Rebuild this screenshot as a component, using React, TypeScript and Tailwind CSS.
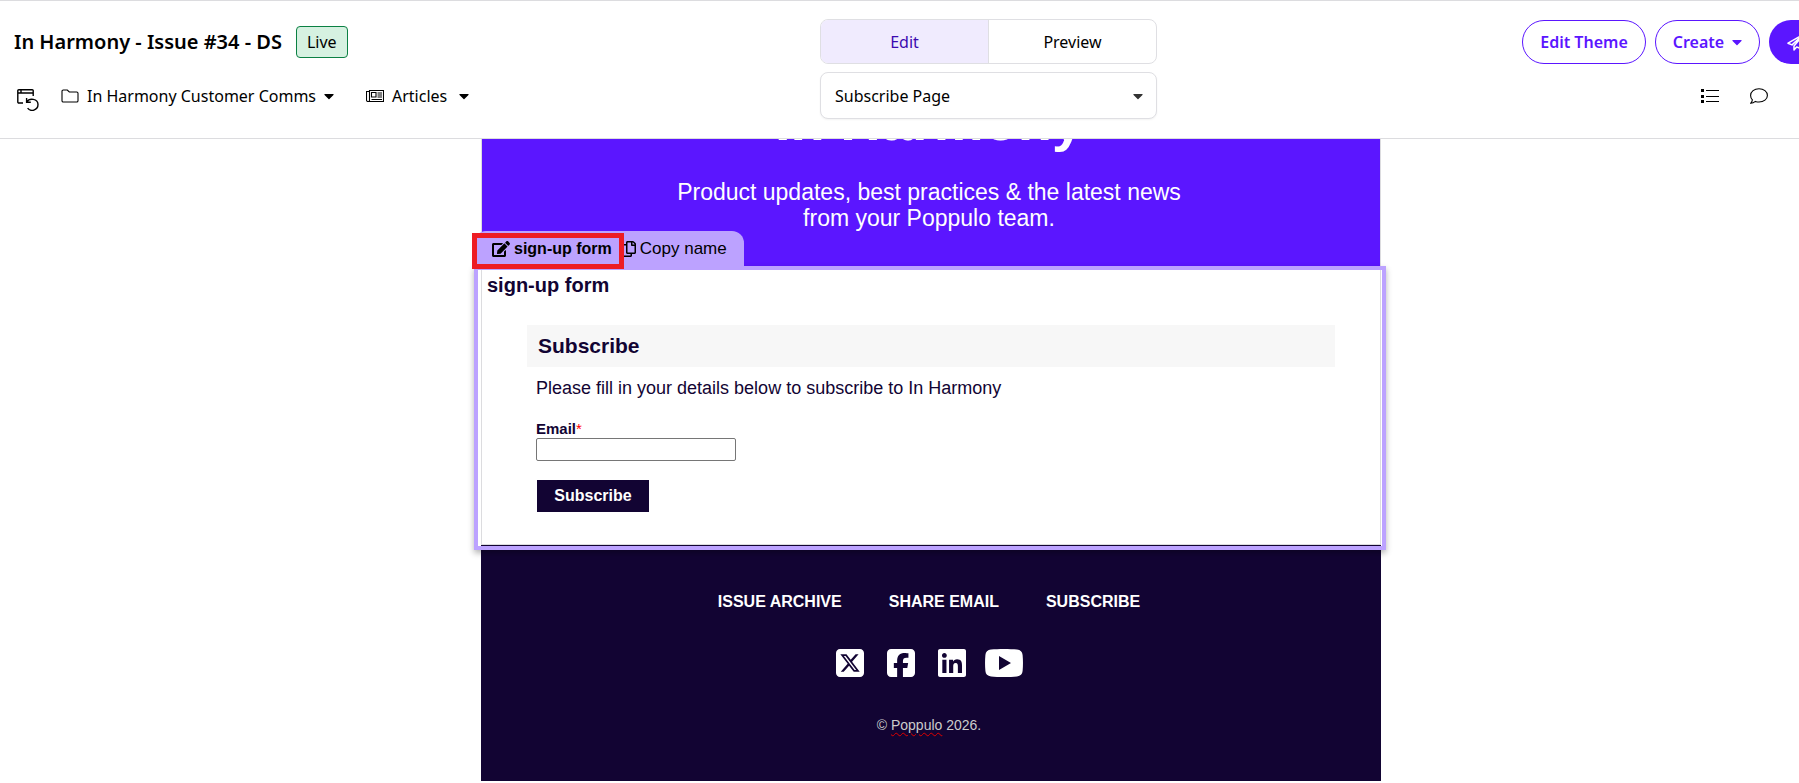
import React from "react";
import { FaCaretDown, FaEdit, FaRegCopy } from "react-icons/fa";
import {
  FaLinkedin,
  FaSquareFacebook,
  FaSquareXTwitter,
} from "react-icons/fa6";

interface IconProps {
  className?: string;
}

const RestoreIcon: React.FC<IconProps> = ({ className }) => (
  <svg viewBox="0 0 22 22" fill="none" stroke="currentColor" className={className}>
    <path d="M6 14H1.8a1 1 0 0 1-1-1V1.7a1 1 0 0 1 1-1h13.4a1 1 0 0 1 1 1V7M.8 4h15.4M4 1v3" strokeWidth="1.4" />
    <path d="M9.8 13c2.4-4.2 11.2-3.6 11.2 2.6 0 6-7.6 7.4-10.4 3.6M9.6 9v4.2h4.2" strokeWidth="1.4" />
  </svg>
);

const FolderIcon: React.FC<IconProps> = ({ className }) => (
  <svg viewBox="0 0 18 14" fill="none" stroke="currentColor" strokeWidth="1.1" className={className}>
    <path d="M1 2.3A1.3 1.3 0 0 1 2.3 1h4l2 2h7.4A1.3 1.3 0 0 1 17 4.3v7.4a1.3 1.3 0 0 1-1.3 1.3H2.3A1.3 1.3 0 0 1 1 11.7z" />
  </svg>
);

const ArticleIcon: React.FC<IconProps> = ({ className }) => (
  <svg viewBox="0 0 18 14" fill="none" stroke="currentColor" strokeWidth="1.1" className={className}>
    <path d="M3.5 11.5v-10h14v11H2A1.5 1.5 0 0 1 .5 11V2.5h3M3.5 11.5a1 1 0 0 1-1 1" />
    <path d="M5.5 3.5H10V8H5.5zM11.5 4H16M11.500 6H16M11.500 8H16M5.500 10.500H16" />
  </svg>
);

const ListIcon: React.FC<IconProps> = ({ className }) => (
  <svg viewBox="0 0 18 16" fill="currentColor" className={className}>
    <path d="M0 1h3v3H0zM0 7h3v3H0zM0 12h3v3H0zM5 2h13v1H5zM5 8h13v1H5zM5 13h13v1H5z" />
  </svg>
);

const CommentIcon: React.FC<IconProps> = ({ className }) => (
  <svg viewBox="0 0 18 16" fill="none" stroke="currentColor" strokeWidth="1.1" className={className}>
    <path d="M9 .7c4.7 0 8.4 2.9 8.400 6.700S13.700 14 9 14c-1.300 0-2.500-.2-3.600-.6C4.300 14.300 2.700 15.200.8 15.200c.9-1 1.500-2.200 1.600-3.400C1.200 10.600.6 9.100.6 7.400.6 3.600 4.300.7 9 .7z" />
  </svg>
);

const SendIcon: React.FC<IconProps> = ({ className }) => (
  <svg viewBox="0 0 18 18" fill="none" stroke="currentColor" strokeWidth="1.5" strokeLinejoin="round" className={className}>
    <path d="M17 1 1 10.200l4 1.700L17 1 7 13v4l2.600-3.100L14 15.700z" />
  </svg>
);

const YoutubeIcon: React.FC<IconProps> = ({ className }) => (
  <svg viewBox="0 0 38 28" fill="currentColor" className={className}>
    <path
      fillRule="evenodd"
      d="M6 .6C13-.2 25-.2 32 .6c3.500.4 5.300 2.200 5.600 5.400.5 5 .5 11 0 16-.3 3.200-2.100 5-5.600 5.400-7 .8-19 .8-26 0C2.500 27 .7 25.200.4 22c-.5-5-.5-11 0-16C.7 2.800 2.500 1 6 .6zM14 7v14l12-7z"
    />
  </svg>
);

const footerLinks = ["ISSUE ARCHIVE", "SHARE EMAIL", "SUBSCRIBE"];

const Header: React.FC = () => (
  <header className="flex shrink-0 overflow-hidden border-y border-[#dcdcdf] bg-white pt-[18px] pb-[19px] font-['Noto_Sans',sans-serif] text-base text-black">
    <div className="flex w-[820px] shrink-0 flex-col pl-3.5">
      <div className="flex h-[46px] items-center gap-3.5">
        <h1 className="text-xl font-semibold">In Harmony - Issue #34 - DS</h1>
        <span className="flex h-8 items-center rounded-sm border border-[#0b8043] bg-[#d6f1e1] px-2.5">
          Live
        </span>
      </div>
      <nav className="mt-2 flex h-[46px] items-center pl-[3px]">
        <button aria-label="Restore version" className="mt-2">
          <RestoreIcon className="h-[22px] w-[22px]" />
        </button>
        <button className="ml-[22px] flex items-center gap-2">
          <FolderIcon className="h-3.5 w-[18px]" />
          In Harmony Customer Comms
          <FaCaretDown className="h-4 w-2.5" />
        </button>
        <button className="ml-8 flex items-center gap-2">
          <ArticleIcon className="h-3.5 w-[18px]" />
          Articles
          <FaCaretDown className="ml-1 h-4 w-2.5" />
        </button>
      </nav>
    </div>

    <div className="flex w-[337px] shrink-0 flex-col gap-2">
      <div className="flex h-[45px] overflow-hidden rounded-lg border border-[#dfdfe3]">
        <button className="flex-1 border-r border-[#dfdfe3] bg-[#f0ebfe] text-[#3c0ab0]">
          Edit
        </button>
        <button className="flex-1">Preview</button>
      </div>
      <div className="relative">
        <select
          aria-label="Page"
          className="h-[47px] w-full appearance-none rounded-lg border border-[#dfdfe3] bg-white px-3.5 shadow-xs"
        >
          <option>Subscribe Page</option>
        </select>
        <FaCaretDown className="pointer-events-none absolute top-4 right-3.5 h-4 w-2.5 text-[#333]" />
      </div>
    </div>

    <div className="-mr-16 ml-auto flex shrink-0 flex-col">
      <div className="flex h-[46px] items-center gap-[9px] font-semibold">
        <button className="h-11 w-[124px] rounded-full border border-[#5b16ff] text-[#5b16ff]">
          Edit Theme
        </button>
        <button className="flex h-11 w-[105px] items-center justify-center gap-2 rounded-full border border-[#5b16ff] text-[#5b16ff]">
          Create
          <FaCaretDown className="h-4 w-2.5" />
        </button>
        <button
          aria-label="Send"
          className="h-11 w-[94px] rounded-full bg-[#5b16ff] pl-[18px] text-white"
        >
          <SendIcon className="h-[18px] w-[18px]" />
        </button>
      </div>
      <div className="mt-2 flex h-[46px] items-center justify-end gap-[31px] pr-[95px]">
        <button aria-label="Outline">
          <ListIcon className="h-4 w-[18px]" />
        </button>
        <button aria-label="Comments">
          <CommentIcon className="h-4 w-[18px]" />
        </button>
      </div>
    </div>
  </header>
);

const Banner: React.FC = () => (
  <section className="flex h-[127px] flex-col justify-end overflow-hidden border-x border-[#dcdcdf] bg-[#5b16ff] pr-1 pb-[35px] text-center text-white">
    <h2 className="text-[56px] leading-[60px] font-bold">In Harmony</h2>
    <p className="mt-7 text-[23px] leading-[26px]">
      Product updates, best practices &amp; the latest news
      <br />
      from your Poppulo team.
    </p>
  </section>
);

const SignUpForm: React.FC = () => (
  <section className="relative -mr-[5px] -ml-[7px] border-4 border-[#bca2ff] bg-white pr-px pl-[3px] text-[#120433] shadow-[0_3px_6px_rgba(0,0,0,0.3)]">
    <div className="absolute -top-[39px] -left-1 flex h-[35px] w-[270px] items-center rounded-t-xl bg-[#bca2ff] pl-[18px] text-base text-black">
      <button className="flex items-center gap-1 font-bold">
        <FaEdit className="h-[18px] w-[18px]" />
        sign-up form
      </button>
      <button className="ml-2.5 flex items-center gap-1 text-[17px]">
        <FaRegCopy className="h-4 w-3.5" />
        Copy name
      </button>
      <div className="pointer-events-none absolute top-0.5 -left-0.5 h-9 w-[152px] border-[5px] border-[#ed1c24]" />
    </div>

    <div className="border-x border-b border-[#dcdcdf] px-[5px] pt-[3px] pb-8">
      <h3 className="text-xl leading-6 font-bold">sign-up form</h3>
      <form
        className="mx-10 mt-7"
        onSubmit={(event) => event.preventDefault()}
      >
        <h4 className="bg-[#f7f7f7] px-[11px] py-[9px] text-[21px] leading-6 font-bold">
          Subscribe
        </h4>
        <div className="px-[9px]">
          <p className="mt-[9px] text-lg leading-6">
            Please fill in your details below to subscribe to In Harmony
          </p>
          <label htmlFor="email" className="mt-5 block text-[15px] leading-[18px] font-bold">
            Email<span className="font-normal text-[#ff0000]">*</span>
          </label>
          <input
            id="email"
            type="email"
            className="block h-[23px] w-[200px] rounded-xs border border-[#767676] bg-white px-1"
          />
          <button className="mt-[19px] ml-px h-8 w-28 bg-[#120433] text-base font-bold text-white">
            Subscribe
          </button>
        </div>
      </form>
    </div>
    <div className="h-px bg-[#120433]" />
  </section>
);

const Footer: React.FC = () => (
  <footer className="flex flex-col items-center bg-[#120433] pt-10 pr-1 pb-[46px] text-white">
    <nav className="flex gap-[47px] text-base leading-6 font-bold">
      {footerLinks.map((link) => (
        <a key={link} href="#">
          {link}
        </a>
      ))}
    </nav>
    <div className="mt-[33px] flex items-center pr-0.5">
      <a href="#" aria-label="X">
        <FaSquareXTwitter className="h-8 w-8" />
      </a>
      <a href="#" aria-label="Facebook" className="ml-[19px]">
        <FaSquareFacebook className="h-8 w-8" />
      </a>
      <a href="#" aria-label="LinkedIn" className="ml-[19px]">
        <FaLinkedin className="h-8 w-8" />
      </a>
      <a href="#" aria-label="YouTube" className="ml-[17px]">
        <YoutubeIcon className="h-7 w-[38px]" />
      </a>
    </div>
    <p className="mt-9 text-sm leading-5 text-[#cccccc]">
      ©{" "}
      <span className="underline decoration-[#e00000] decoration-wavy decoration-1 underline-offset-2">
        Poppulo
      </span>{" "}
      2026.
    </p>
  </footer>
);

const App: React.FC = () => {
  return (
    <div className="flex min-h-screen flex-col overflow-hidden bg-white">
      <Header />
      <main className="flex justify-center pl-[63px] font-['Liberation_Sans',Arial,sans-serif]">
        <article className="w-full max-w-[900px]">
          <Banner />
          <SignUpForm />
          <Footer />
        </article>
      </main>
    </div>
  );
};

export default App;
